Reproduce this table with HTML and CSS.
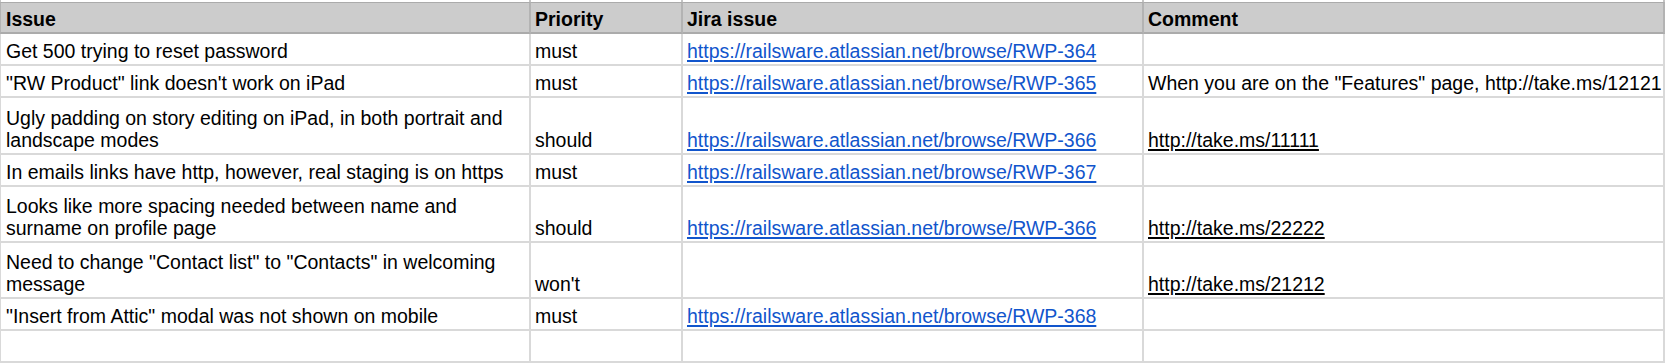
FILE: index.html
```html
<!DOCTYPE html>
<html lang="en">
<head>
<meta charset="utf-8">
<title>Issues</title>
<link rel="stylesheet" href="styles.css">
</head>
<body>
<div class="sheet">
  <div class="row stub"><div class="cell"></div><div class="cell"></div><div class="cell"></div><div class="cell"></div></div>
  <div class="row head">
    <div class="cell">Issue</div>
    <div class="cell">Priority</div>
    <div class="cell">Jira issue</div>
    <div class="cell">Comment</div>
  </div>
  <div class="row">
    <div class="cell">Get 500 trying to reset password</div>
    <div class="cell">must</div>
    <div class="cell"><a class="jira" href="#">https://railsware.atlassian.net/browse/RWP-364</a></div>
    <div class="cell comment"></div>
  </div>
  <div class="row">
    <div class="cell">"RW Product" link doesn't work on iPad</div>
    <div class="cell">must</div>
    <div class="cell"><a class="jira" href="#">https://railsware.atlassian.net/browse/RWP-365</a></div>
    <div class="cell comment">When you are on the "Features" page, http://take.ms/12121</div>
  </div>
  <div class="row tall tall-plus">
    <div class="cell">Ugly padding on story editing on iPad, in both portrait and landscape modes</div>
    <div class="cell">should</div>
    <div class="cell"><a class="jira" href="#">https://railsware.atlassian.net/browse/RWP-366</a></div>
    <div class="cell comment"><a class="plain" href="#">http://take.ms/11111</a></div>
  </div>
  <div class="row">
    <div class="cell">In emails links have http, however, real staging is on https</div>
    <div class="cell">must</div>
    <div class="cell"><a class="jira" href="#">https://railsware.atlassian.net/browse/RWP-367</a></div>
    <div class="cell comment"></div>
  </div>
  <div class="row tall">
    <div class="cell">Looks like more spacing needed between name and surname on profile page</div>
    <div class="cell">should</div>
    <div class="cell"><a class="jira" href="#">https://railsware.atlassian.net/browse/RWP-366</a></div>
    <div class="cell comment"><a class="plain" href="#">http://take.ms/22222</a></div>
  </div>
  <div class="row tall">
    <div class="cell">Need to change "Contact list" to "Contacts" in welcoming message</div>
    <div class="cell">won't</div>
    <div class="cell"></div>
    <div class="cell comment"><a class="plain" href="#">http://take.ms/21212</a></div>
  </div>
  <div class="row">
    <div class="cell">"Insert from Attic" modal was not shown on mobile</div>
    <div class="cell">must</div>
    <div class="cell"><a class="jira" href="#">https://railsware.atlassian.net/browse/RWP-368</a></div>
    <div class="cell comment"></div>
  </div>
  <div class="row">
    <div class="cell"></div>
    <div class="cell"></div>
    <div class="cell"></div>
    <div class="cell comment"></div>
  </div>
</div>
</body>
</html>
```
FILE: styles.css
```css
* {
  box-sizing: border-box;
}

body {
  margin: 0;
  background: #ffffff;
  font-family: "Liberation Sans", Arial, sans-serif;
  font-size: 19.5px;
  color: #000000;
}

.sheet {
  width: 1666px;
}

.row {
  display: grid;
  grid-template-columns: 531px 152px 461px 521px;
}

.cell {
  height: 32px;
  display: flex;
  align-items: flex-end;
  padding: 0 4px 2px 4px;
  line-height: 22px;
  border-right: 2px solid #d9d9d9;
  border-bottom: 2px solid #d9d9d9;
  overflow: hidden;
}

.cell:first-child {
  border-left: 1px solid #d9d9d9;
  padding-left: 5px;
}

.tall .cell {
  height: 56px;
}

.tall-plus .cell {
  height: 57px;
}

.stub .cell {
  height: 2px;
  padding: 0;
  border-bottom: none;
  border-right-color: #c4c4c4;
}

.stub .cell:first-child {
  border-left-color: #c4c4c4;
}

.head .cell {
  height: 32px;
  background: #cccccc;
  font-weight: bold;
  border-top: 1px solid #ababab;
  border-right-color: #b3b3b3;
  border-bottom-color: #ababab;
}

.head .cell:first-child {
  border-left-color: #b3b3b3;
}

.comment {
  white-space: nowrap;
}

.jira {
  color: #1155cc;
  text-decoration: underline;
  text-decoration-thickness: 2px;
  text-underline-offset: 2px;
}

.plain {
  color: #000000;
  text-decoration: underline;
  text-decoration-thickness: 2px;
  text-underline-offset: 2px;
}
```
